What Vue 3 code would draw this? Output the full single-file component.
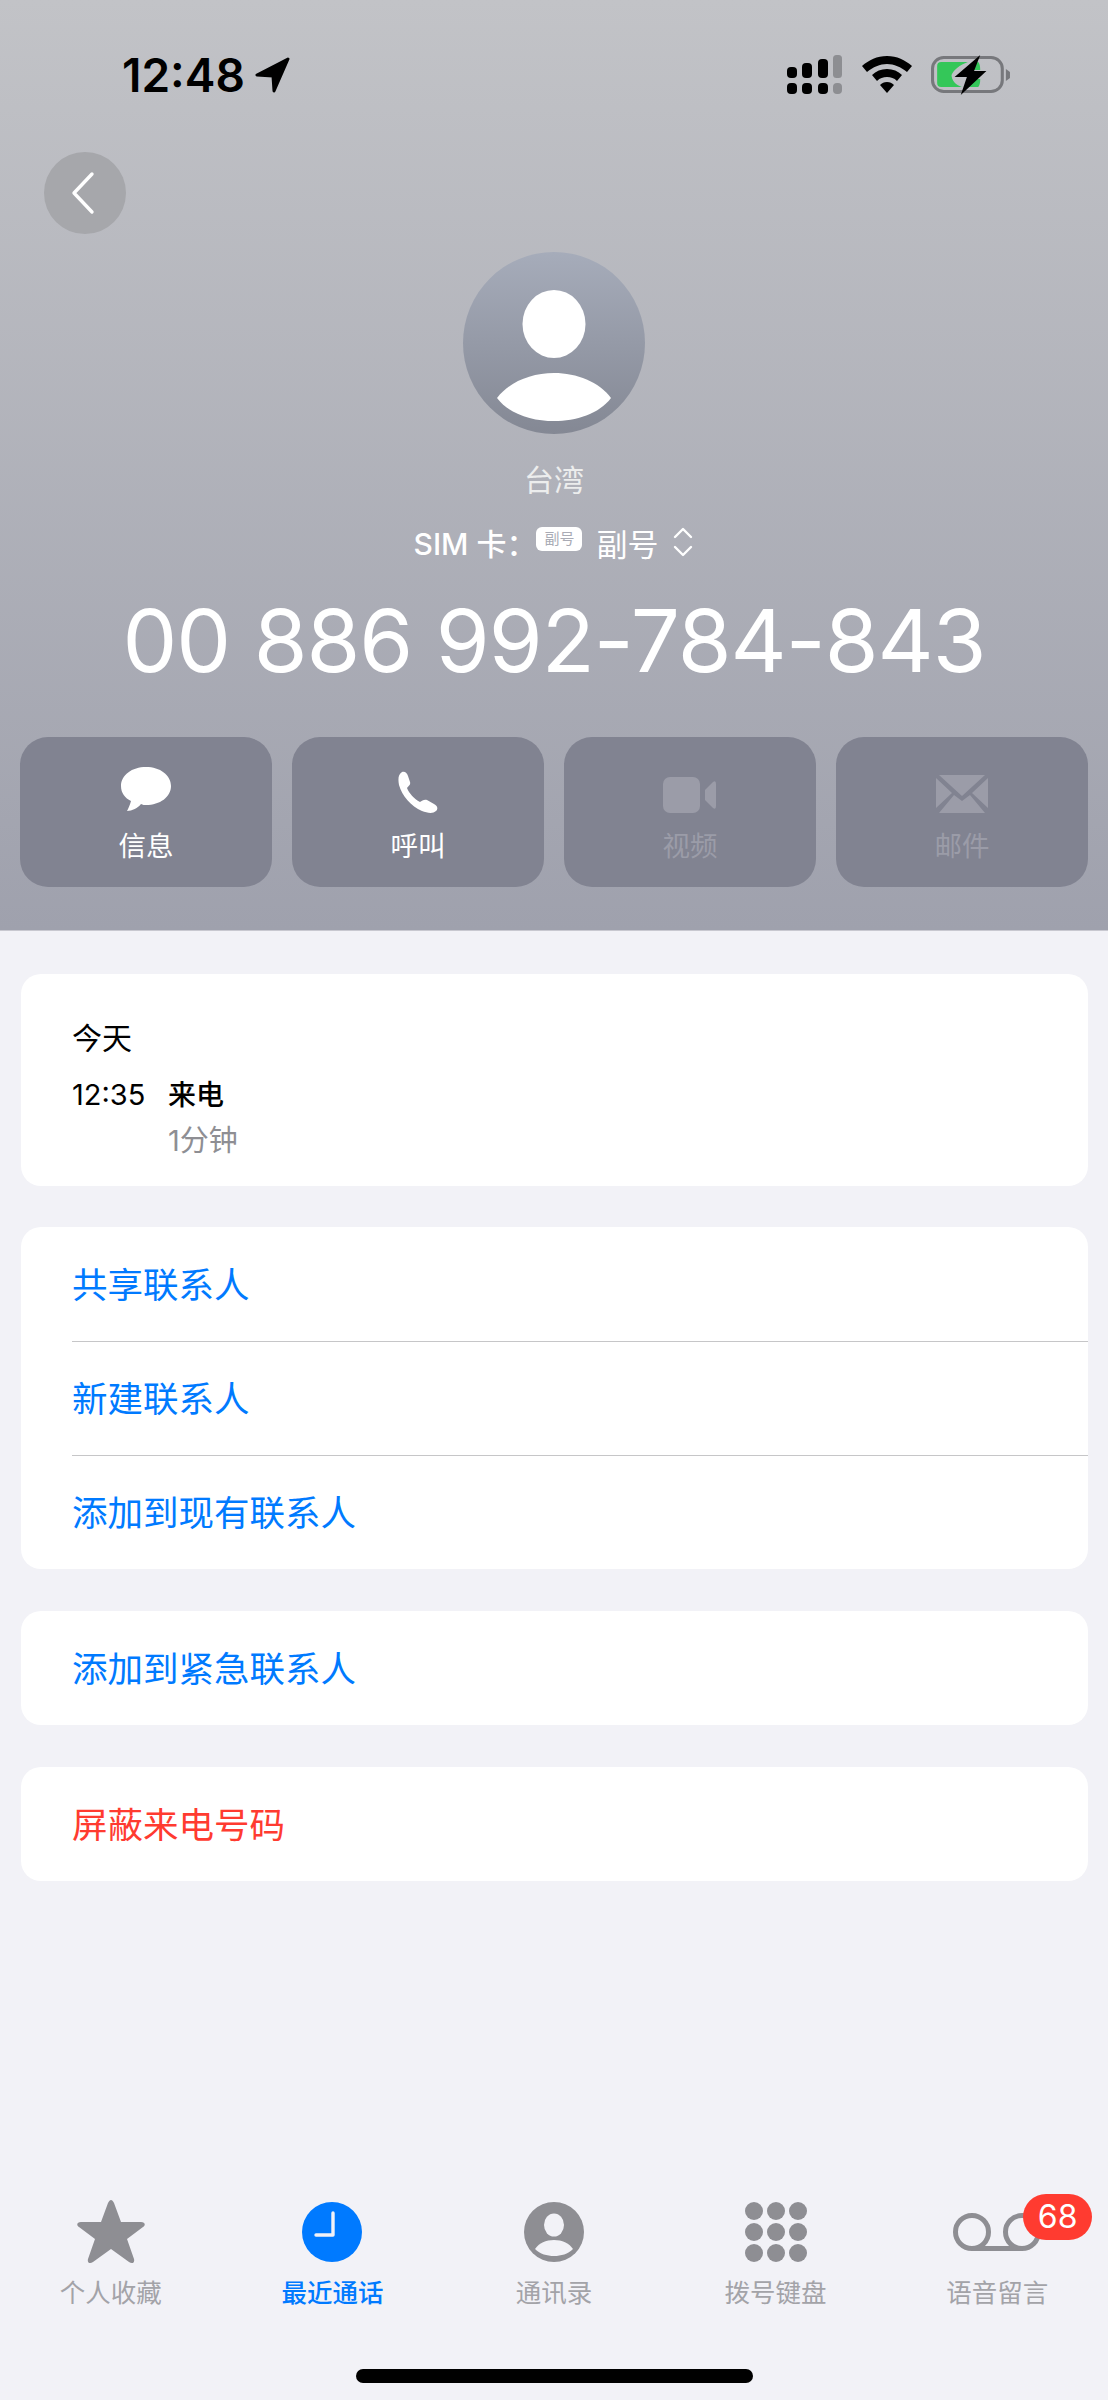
<script setup>
const actions = [
  { label: '信息', icon: 'msg', off: false },
  { label: '呼叫', icon: 'phone', off: false },
  { label: '视频', icon: 'video', off: true },
  { label: '邮件', icon: 'mail', off: true },
]
const tabs = [
  { label: '个人收藏', icon: 'star' },
  { label: '最近通话', icon: 'clock', active: true },
  { label: '通讯录', icon: 'person' },
  { label: '拨号键盘', icon: 'keypad' },
  { label: '语音留言', icon: 'voicemail', badge: 68 },
]
const dots = [0, 1, 2]
</script>

<template>
  <div class="screen">
    <header class="head">
      <div class="status">
        <div class="time">12:48
          <svg class="loc" width="36" height="36" viewBox="0 0 36 36"><path d="M33 2 L2 18 L18 19 L19 34 Z" fill="#000" stroke="#000" stroke-width="3" stroke-linejoin="round"/></svg>
        </div>
        <div class="status-icons">
          <svg width="56" height="40" viewBox="0 0 56 40">
            <rect x="0" y="12" width="10" height="11" rx="4" fill="#000"/>
            <rect x="15" y="8" width="10" height="15" rx="4" fill="#000"/>
            <rect x="31" y="4" width="10" height="19" rx="4" fill="#000"/>
            <rect x="46" y="0" width="9" height="23" rx="3.5" fill="#8d8e92"/>
            <rect x="0" y="28" width="10" height="11" rx="4" fill="#000"/>
            <rect x="15" y="28" width="10" height="11" rx="4" fill="#000"/>
            <rect x="31" y="28" width="10" height="11" rx="4" fill="#000"/>
            <rect x="46" y="28" width="9" height="11" rx="4" fill="#8d8e92"/>
          </svg>
          <svg class="wifi" width="50" height="38" viewBox="0 0 50 38">
            <path d="M25 0 C15 0 7 4 0 10 L5 16 C11 11 18 8 25 8 C32 8 39 11 45 16 L50 10 C43 4 35 0 25 0 Z" fill="#000"/>
            <path d="M25 13 C19 13 14 15 10 19 L15 25 C18 22 21 21 25 21 C29 21 32 22 35 25 L40 19 C36 15 31 13 25 13 Z" fill="#000"/>
            <path d="M25 26 C22 26 20 27 18 29 L25 37 L32 29 C30 27 28 26 25 26 Z" fill="#000"/>
          </svg>
          <svg class="batt" width="80" height="40" viewBox="0 0 78 40" preserveAspectRatio="none">
            <rect x="1.5" y="2.5" width="68" height="34" rx="11" fill="none" stroke="#77787c" stroke-width="3"/>
            <path d="M73 14 L77 17 L77 23 L73 26 Z" fill="#77787c"/>
            <path d="M10 7 L36 7 C28 10 22 15 20 20 C20 25 24 30 30 32 L10 32 Q6 32 6 28 L6 11 Q6 7 10 7 Z" fill="#34c759"/>
            <path d="M42 8 L46 7 Q48 9 48 15 L42 15 Z M42 24 L48 24 Q48 30 46 32 L36 32 Z" fill="#34c759"/>
            <path d="M48 0 L23 22 L35 22 L29 40 L54 16 L42 16 Z" fill="#000"/>
          </svg>
        </div>
      </div>
      <div class="back-row">
        <button class="back">
          <svg width="28" height="44" viewBox="0 0 28 44"><path d="M24 3 L6 22 L24 41" fill="none" stroke="#fff" stroke-width="3.4" stroke-linecap="round" stroke-linejoin="round"/></svg>
        </button>
      </div>
      <div class="avatar">
        <svg width="182" height="182" viewBox="0 0 182 182">
          <ellipse cx="91" cy="72" rx="31.5" ry="34" fill="#fff"/>
          <path d="M34 146 C46 130 68 121 91 121 C114 121 136 130 148 146 C136 162 113 169 91 169 C69 169 46 162 34 146 Z" fill="#fff"/>
        </svg>
      </div>
      <div class="region">台湾</div>
      <div class="sim">
        <span class="sim-label">SIM 卡：</span>
        <span class="sim-tag">副号</span>
        <span class="sim-name">副号</span>
        <svg width="22" height="30" viewBox="0 0 22 30"><path d="M3 10 L11 2 L19 10 M3 20 L11 28 L19 20" fill="none" stroke="#fff" stroke-width="2.4" stroke-linecap="round" stroke-linejoin="round"/></svg>
      </div>
      <div class="number">00 886 992-784-843</div>
      <div class="actions">
        <div v-for="a in actions" :key="a.label" class="action" :class="{ off: a.off }">
          <svg v-if="a.icon == 'msg'" width="50" height="46" viewBox="0 0 50 46"><path d="M25 0 C11 0 0 8 0 19 C0 26 4 31 10 34 C9 38 7 42 6 44 C11 44 17 41 20 37 C22 38 23 38 25 38 C39 38 50 30 50 19 C50 8 39 0 25 0 Z" fill="#fff"/></svg>
          <svg v-if="a.icon == 'phone'" width="42" height="42" viewBox="0 0 42 42"><path d="M5 1 C8 0 10 2 11 5 L13 11 C14 14 11 15 10 17 C12 22 17 28 23 31 C25 30 27 28 30 29 L37 33 C41 35 41 38 39 40 C36 43 30 42 25 40 C14 35 5 25 2 14 C1 8 1 4 5 1 Z" fill="#fff"/></svg>
          <svg v-if="a.icon == 'video'" width="54" height="36" viewBox="0 0 54 36"><rect x="0" y="0" width="37" height="36" rx="7" fill="#9b9ca8"/><path d="M42 13 L50 5 Q53 3 53 7 L53 29 Q53 33 50 31 L42 23 Z" fill="#9b9ca8"/></svg>
          <svg v-if="a.icon == 'mail'" width="52" height="38" viewBox="0 0 52 38">
            <path d="M3 0 L49 0 L26 21 Z" fill="#9b9ca8"/>
            <path d="M0 3 L16 18 L0 33 Z M52 3 L36 18 L52 33 Z" fill="#9b9ca8"/>
            <path d="M3 38 L18 20 L26 26 L34 20 L49 38 Z" fill="#9b9ca8"/>
          </svg>
          <span>{{ a.label }}</span>
        </div>
      </div>
    </header>

    <main class="body">
      <section class="card info">
        <div class="day">今天</div>
        <div class="call">
          <span class="call-time">12:35</span>
          <div>
            <div class="call-type">来电</div>
            <div class="call-len">1分钟</div>
          </div>
        </div>
      </section>
      <section class="card">
        <div class="row blue">共享联系人</div>
        <div class="row blue">新建联系人</div>
        <div class="row blue">添加到现有联系人</div>
      </section>
      <section class="card">
        <div class="row blue">添加到紧急联系人</div>
      </section>
      <section class="card">
        <div class="row red">屏蔽来电号码</div>
      </section>
    </main>

    <nav class="tabs">
      <div v-for="t in tabs" :key="t.label" class="tab" :class="{ active: t.active }">
        <div class="tab-icon">
          <svg v-if="t.icon == 'star'" width="68" height="64" viewBox="0 0 68 64"><path d="M34 0 C35 0 36 1 37 3 L44 22 L64 22 C68 22 69 25 66 27 L50 39 L57 59 C58 63 55 64 52 62 L34 49 L16 62 C13 64 10 63 11 59 L18 39 L2 27 C-1 25 0 22 4 22 L24 22 L31 3 C32 1 33 0 34 0 Z" fill="#8e8e93"/></svg>
          <svg v-if="t.icon == 'clock'" width="60" height="60" viewBox="0 0 60 60"><circle cx="30" cy="30" r="30" fill="#007aff"/><path d="M31 11 L31 33 L14 33" fill="none" stroke="#f2f2f7" stroke-width="3.4" stroke-linecap="round" stroke-linejoin="round"/></svg>
          <svg v-if="t.icon == 'person'" width="60" height="60" viewBox="0 0 60 60"><circle cx="30" cy="30" r="30" fill="#8e8e93"/><ellipse cx="30" cy="23" rx="10" ry="11.5" fill="#f2f2f7"/><path d="M11 47 C15 41 22 38 30 38 C38 38 45 41 49 47 C44 52 37 54 30 54 C23 54 16 52 11 47 Z" fill="#f2f2f7"/></svg>
          <svg v-if="t.icon == 'keypad'" width="62" height="60" viewBox="0 0 62 60">
            <template v-for="r in dots" :key="r">
              <circle v-for="c in dots" :key="c" :cx="9 + c * 22" :cy="9 + r * 21" r="9" fill="#8e8e93"/>
            </template>
          </svg>
          <svg v-if="t.icon == 'voicemail'" width="88" height="40" viewBox="0 0 88 40"><circle cx="19" cy="20" r="16.5" fill="none" stroke="#8e8e93" stroke-width="5"/><circle cx="69" cy="20" r="16.5" fill="none" stroke="#8e8e93" stroke-width="5"/><path d="M19 36.5 L69 36.5" stroke="#8e8e93" stroke-width="5"/></svg>
          <span v-if="t.badge" class="badge">{{ t.badge }}</span>
        </div>
        <span class="tab-label">{{ t.label }}</span>
      </div>
    </nav>
    <div class="home-wrap"><div class="home"></div></div>
  </div>
</template>

<style scoped>
.screen {
  width: 1108px;
  height: 2400px;
  background: #f2f2f7;
  display: flex;
  flex-direction: column;
  font-family: Inter, "Noto Sans CJK SC", sans-serif;
  color: #000;
  overflow: hidden;
}
.head {
  height: 931px;
  box-sizing: border-box;
  background: linear-gradient(#c2c3c7, #9fa1ad);
  border-bottom: 1px solid #c8c8d0;
  padding: 0 20px;
  display: flex;
  flex-direction: column;
}
.status {
  display: flex;
  justify-content: space-between;
  align-items: center;
  height: 40px;
  margin-top: 55px;
  padding: 0 77px 0 102px;
}
.time {
  display: flex;
  align-items: center;
  gap: 10px;
  font-size: 46px;
  font-weight: 600;
  letter-spacing: 0;
}
.status-icons {
  display: flex;
  align-items: center;
  gap: 19px;
}
.back-row {
  margin-top: 57px;
  padding-left: 24px;
}
.back {
  width: 82px;
  height: 82px;
  border: 0;
  border-radius: 50%;
  background: #a6a7ab;
  display: flex;
  align-items: center;
  justify-content: center;
  padding: 0 6px 0 0;
}
.avatar {
  width: 182px;
  height: 182px;
  border-radius: 50%;
  align-self: center;
  margin-top: 18px;
  overflow: hidden;
  background: linear-gradient(#a6acba, #848894);
}
.region {
  text-align: center;
  margin-top: 26px;
  font-size: 30px;
  line-height: 40px;
  color: #eceded;
}
.sim {
  display: flex;
  justify-content: center;
  align-items: center;
  margin-top: 22px;
  height: 40px;
  color: #fff;
  font-size: 30px;
  gap: 6px;
}
.sim-label {
  margin-right: -6px;
  font-weight: 500;
}
.sim-tag {
  background: #fff;
  color: #a9abb5;
  font-size: 15px;
  line-height: 24px;
  width: 46px;
  text-align: center;
  border-radius: 6px;
  margin: 0 8px 6px 0;
}
.sim-name {
  font-size: 31px;
  margin-right: 8px;
}
.number {
  text-align: center;
  color: #fff;
  font-size: 87px;
  line-height: 100px;
  margin-top: 29px;
  letter-spacing: -1px;
}
.actions {
  display: grid;
  grid-template-columns: repeat(4, 252px);
  justify-content: space-between;
  margin-top: 46px;
}
.action {
  height: 150px;
  box-sizing: border-box;
  background: #818391;
  border-radius: 28px;
  display: flex;
  flex-direction: column;
  align-items: center;
  justify-content: flex-end;
  gap: 17px;
  padding-bottom: 25px;
  color: #fff;
  font-size: 27.5px;
  line-height: 32px;
}
.action.off {
  color: #9b9ca8;
}
.body {
  flex: 1;
  padding: 43px 20px 0 21px;
  display: flex;
  flex-direction: column;
  gap: 41px;
}
.card {
  background: #fff;
  border-radius: 20px;
}
.card + .card + .card {
  margin-top: 1px;
}
.info {
  height: 212px;
  box-sizing: border-box;
  padding: 44px 51px 0;
}
.day {
  font-size: 30px;
  line-height: 40px;
}
.call {
  display: flex;
  margin-top: 18px;
  gap: 22px;
  font-size: 29px;
  line-height: 38px;
}
.call-time {
  width: 74px;
}
.call-type {
  font-size: 28px;
  font-weight: 500;
}
.call-len {
  color: #8e8e93;
  margin-top: 8px;
}
.row {
  height: 114px;
  line-height: 114px;
  padding-top: 2px;
  margin-left: 51px;
  font-size: 35.5px;
  box-sizing: border-box;
}
.row + .row {
  border-top: 1px solid #c6c6c8;
  padding-top: 1px;
}
.blue {
  color: #007aff;
}
.red {
  color: #ff3b30;
}
.tabs {
  display: grid;
  grid-template-columns: repeat(5, 1fr);
}
.tab {
  display: flex;
  flex-direction: column;
  align-items: center;
  color: #a3a3a8;
  font-size: 25.5px;
}
.tab.active {
  color: #007aff;
  font-weight: 500;
}
.tab-icon {
  position: relative;
  height: 64px;
  display: flex;
  align-items: center;
  justify-content: center;
}
.tab-label {
  margin-top: 13px;
  line-height: 32px;
}
.badge {
  position: absolute;
  left: 70px;
  top: -6px;
  width: 69px;
  height: 46px;
  border-radius: 23px;
  background: #ff3b30;
  color: #fff;
  font-size: 32px;
  line-height: 46px;
  text-align: center;
}
.home-wrap {
  display: flex;
  justify-content: center;
  padding: 60px 0 17px;
}
.home {
  width: 397px;
  height: 14px;
  border-radius: 7px;
  background: #000;
}
</style>
